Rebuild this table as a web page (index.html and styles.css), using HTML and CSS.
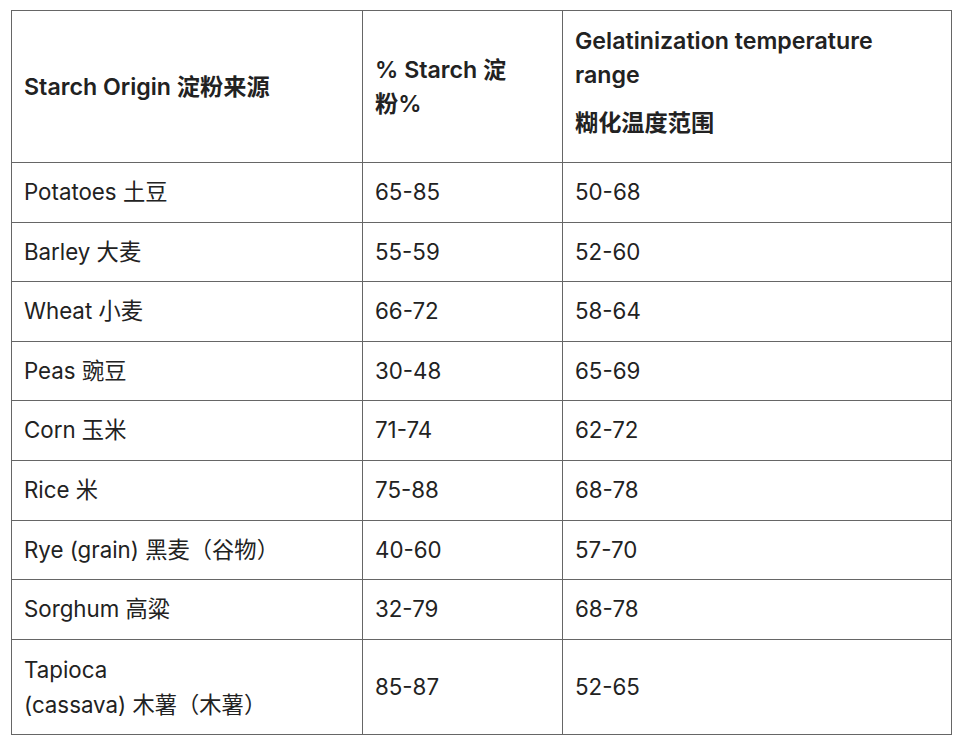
FILE: index.html
```html
<!DOCTYPE html>
<html lang="zh">
<head>
<meta charset="utf-8">
<title>Starch</title>
<link rel="stylesheet" href="styles.css">
</head>
<body>
<table class="starch">
  <colgroup>
    <col class="c1"><col class="c2"><col class="c3">
  </colgroup>
  <thead>
    <tr>
      <th>Starch Origin 淀粉来源</th>
      <th class="h-pct">% Starch 淀粉%</th>
      <th class="h-gel"><p class="h-en">Gelatinization temperature range</p><p class="h-zh">糊化温度范围</p></th>
    </tr>
  </thead>
  <tbody>
    <tr><td>Potatoes 土豆</td><td>65-85</td><td>50-68</td></tr>
    <tr><td>Barley 大麦</td><td>55-59</td><td>52-60</td></tr>
    <tr><td>Wheat 小麦</td><td>66-72</td><td>58-64</td></tr>
    <tr><td>Peas 豌豆</td><td>30-48</td><td>65-69</td></tr>
    <tr><td>Corn 玉米</td><td>71-74</td><td>62-72</td></tr>
    <tr><td>Rice 米</td><td>75-88</td><td>68-78</td></tr>
    <tr><td>Rye (grain) 黑麦（谷物）</td><td>40-60</td><td>57-70</td></tr>
    <tr><td>Sorghum 高粱</td><td>32-79</td><td>68-78</td></tr>
    <tr class="tall"><td>Tapioca<br>(cassava) 木薯（木薯）</td><td>85-87</td><td>52-65</td></tr>
  </tbody>
</table>
</body>
</html>
```

FILE: styles.css
```css
html, body {
  margin: 0;
  padding: 0;
  background: #fff;
}
body {
  padding: 10px 0 0 11px;
  font-family: Inter, "Noto Sans CJK SC", "Noto Sans", sans-serif;
  color: #222;
  font-size: 22.3px;
}
.starch {
  border-collapse: collapse;
  table-layout: fixed;
  width: 940px;
}
.c1 { width: 351px; }
.c2 { width: 200px; }
.c3 { width: 389px; }
.starch th, .starch td {
  border: 1px solid #666;
  padding: 12px 12px;
  text-align: left;
  vertical-align: middle;
  line-height: 34px;
}
.starch th {
  font-weight: 600;
  font-size: 23.2px;
  height: 127px;
}
.starch th.h-pct {
  padding-right: 24px;
}
.starch th.h-gel {
  padding-right: 40px;
}
.starch td {
  height: 34.6px;
  line-height: 34.6px;
  font-weight: 400;
}
.starch .tall td {
  height: 70px;
  line-height: 35px;
}
.h-en, .h-zh {
  margin: 0;
}
.h-zh {
  margin-top: 14px;
  margin-bottom: 10px;
}
```
